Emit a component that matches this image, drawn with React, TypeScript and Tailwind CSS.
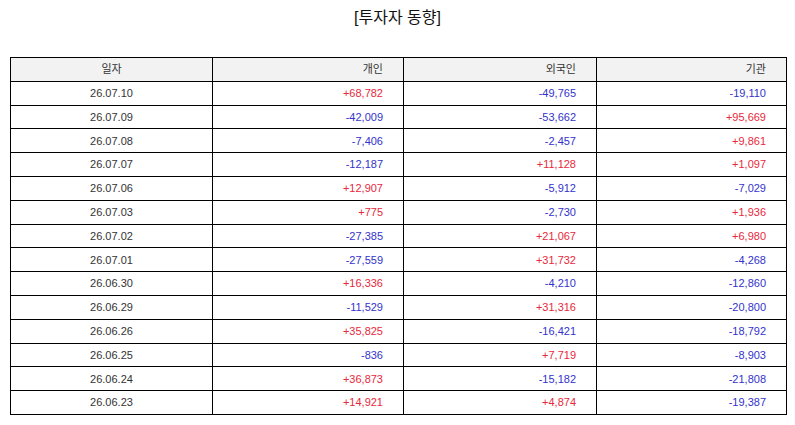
const rows: [string, string, string, string][] = [
  ['26.07.10', '+68,782', '-49,765', '-19,110'],
  ['26.07.09', '-42,009', '-53,662', '+95,669'],
  ['26.07.08', '-7,406', '-2,457', '+9,861'],
  ['26.07.07', '-12,187', '+11,128', '+1,097'],
  ['26.07.06', '+12,907', '-5,912', '-7,029'],
  ['26.07.03', '+775', '-2,730', '+1,936'],
  ['26.07.02', '-27,385', '+21,067', '+6,980'],
  ['26.07.01', '-27,559', '+31,732', '-4,268'],
  ['26.06.30', '+16,336', '-4,210', '-12,860'],
  ['26.06.29', '-11,529', '+31,316', '-20,800'],
  ['26.06.26', '+35,825', '-16,421', '-18,792'],
  ['26.06.25', '-836', '+7,719', '-8,903'],
  ['26.06.24', '+36,873', '-15,182', '-21,808'],
  ['26.06.23', '+14,921', '+4,874', '-19,387'],
];

function Num({ v }: { v: string }) {
  const up = v.startsWith('+');
  return (
    <td className={`border border-black pr-5 text-right ${up ? 'text-[#e8283c]' : 'text-[#3333cc]'}`}>
      {v}
    </td>
  );
}

export default function App() {
  return (
    <div
      className="w-[795px] h-[425px] bg-white text-[#333]"
      style={{ fontFamily: '"Liberation Sans", "Noto Sans CJK KR", sans-serif' }}
    >
      <h1 className="pt-[6px] text-center text-[16px] leading-[24px] text-[#111]">[투자자 동향]</h1>
      <div className="px-[10px] pt-[27px]">
        <table className="w-[776px] border-collapse text-[11px] table-fixed">
          <colgroup>
            <col className="w-[202px]" />
            <col className="w-[191px]" />
            <col className="w-[193px]" />
            <col className="w-[190px]" />
          </colgroup>
          <thead>
            <tr className="h-[23.8px] bg-[#f2f2f2]">
              <th className="border border-black font-normal text-center">일자</th>
              <th className="border border-black font-normal text-right pr-5">개인</th>
              <th className="border border-black font-normal text-right pr-5">외국인</th>
              <th className="border border-black font-normal text-right pr-5">기관</th>
            </tr>
          </thead>
          <tbody>
            {rows.map((r) => (
              <tr key={r[0]} className="h-[23.8px]">
                <td className="border border-black text-center">{r[0]}</td>
                <Num v={r[1]} />
                <Num v={r[2]} />
                <Num v={r[3]} />
              </tr>
            ))}
          </tbody>
        </table>
      </div>
    </div>
  );
}
